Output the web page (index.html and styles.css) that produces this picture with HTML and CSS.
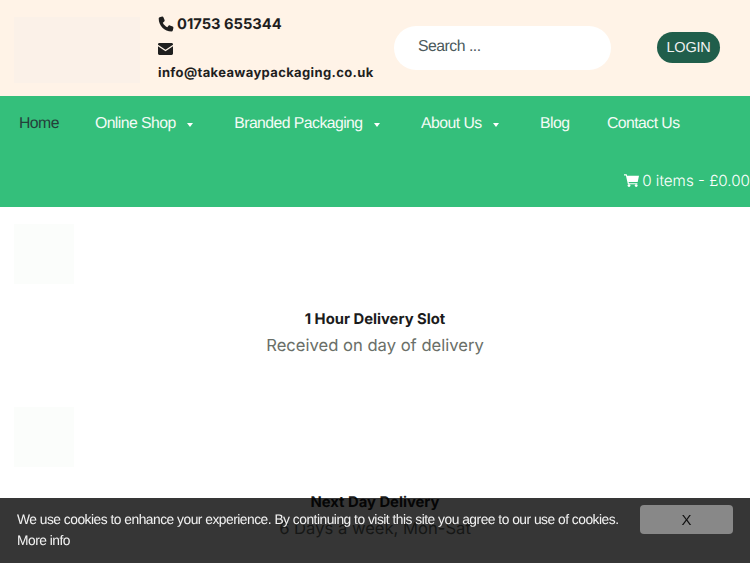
FILE: index.html
```html
<!DOCTYPE html>
<html lang="en">
<head>
<meta charset="utf-8">
<title>Takeaway Packaging</title>
<link rel="stylesheet" href="styles.css">
</head>
<body>
<header class="top">
  <div class="logo"></div>
  <div class="contact">
    <div class="phone">
      <svg class="ico-phone" viewBox="0 0 16 16"><path d="M4.2.6 1.6 1.2C1 1.4.7 1.8.7 2.4c0 7.200 5.700 13 12.900 13 .6 0 1-.3 1.200-.9l.6-2.600c.1-.6-.1-1.100-.7-1.300L11.900 9.400c-.5-.2-1-.1-1.400.3L9.300 11.200C7.400 10.300 5.700 8.600 4.800 6.700L6.300 5.500c.4-.4.5-.9.3-1.400L5.400 1.300C5.200.8 4.700.5 4.200.6Z"/></svg>
      <span>01753 655344</span>
    </div>
    <svg class="ico-mail" viewBox="0 0 15 12"><path d="M1.400 0h12.200C14.400 0 15 .6 15 1.300v.4L7.500 6.700 0 1.700v-.4C0 .6.600 0 1.400 0Z"/><path d="M0 3.200 7.500 8.200 15 3.200v7.400c0 .8-.6 1.400-1.400 1.400H1.400C.6 12 0 11.400 0 10.600Z"/></svg>
    <div class="email">info@takeawaypackaging.co.uk</div>
  </div>
  <div class="search">Search ...</div>
  <a class="login">LOGIN</a>
</header>
<nav class="nav">
  <ul class="menu">
    <li class="item active">Home</li>
    <li class="item">Online Shop<i class="caret"></i></li>
    <li class="item">Branded Packaging<i class="caret"></i></li>
    <li class="item">About Us<i class="caret"></i></li>
    <li class="item">Blog</li>
    <li class="item">Contact Us</li>
  </ul>
  <div class="cart">
    <svg class="ico-cart" viewBox="0 0 15 13"><path d="M0 .3h2.700l.4 1.500H15l-1.300 6.100H4.600l.3 1.300h8.500v1.100H3.900L1.900 1.400H0Z"/><circle cx="5" cy="11.600" r="1.400"/><circle cx="12.200" cy="11.600" r="1.400"/></svg>
    <span>0 items - £0.00</span>
  </div>
</nav>
<main>
  <section class="feature">
    <div class="thumb"></div>
    <h3 class="f-title">1 Hour Delivery Slot</h3>
    <p class="f-sub">Received on day of delivery</p>
  </section>
  <section class="feature">
    <div class="thumb"></div>
    <h3 class="f-title">Next Day Delivery</h3>
    <p class="f-sub">6 Days a week, Mon-Sat</p>
  </section>
</main>
<aside class="cookie">
  <div class="cookie-text">We use cookies to enhance your experience. By continuing to visit this site you agree to our use of cookies.<br>More info</div>
  <button class="cookie-btn">X</button>
</aside>
</body>
</html>
```
FILE: styles.css
```css
* { box-sizing: border-box; }
html, body { margin: 0; padding: 0; }
body { background: #fff; font-family: "Inter", "Liberation Sans", sans-serif; color: #1e1e1e; height: 563px; overflow: hidden; text-rendering: geometricPrecision; }

.top { height: 96px; background: #fff3e7; display: flex; align-items: flex-start; padding: 17px 0 0 14px; }
.logo { width: 126px; height: 66px; background: #fbf1e8; flex: none; }
.contact { margin: -3px 0 0 18px; width: 236px; flex: none; font-weight: 700; color: #1f1f1f; }
.phone { display: flex; align-items: center; gap: 3px; font-size: 14.700px; height: 20px; }
.ico-phone { width: 16px; height: 16px; fill: #1f1f1f; }
.ico-mail { display: block; width: 15px; height: 12px; fill: #1f1f1f; margin-top: 9px; }
.email { font-size: 13px; margin-top: 9px; line-height: 18px; white-space: nowrap; letter-spacing: .36px; }
.search { width: 217px; height: 44px; margin: 9px 0 0; flex: none; background: #fff; border-radius: 22px; padding-left: 24px; font: 15.800px/41px "Liberation Sans", sans-serif; letter-spacing: -.5px; color: #4b5a5c; }
.login { margin: 15px 0 0 46px; width: 63px; height: 31px; flex: none; background: #205e4b; border-radius: 16px; color: #f2f2f2; font: 14.500px/32px "Liberation Sans", sans-serif; letter-spacing: -.2px; text-align: center; }

.nav { height: 111px; background: #34bf7b; font-family: "Liberation Sans", sans-serif; font-size: 15.800px; color: #fff; }
.menu { list-style: none; margin: 0; padding: 0 0 0 19px; display: flex; height: 56px; }
.item { line-height: 55px; margin-right: 37.500px; white-space: nowrap; letter-spacing: -.56px; color: #f3fbf6; }
.item.active { color: #24403a; margin-right: 36px; }
.caret { display: inline-block; margin: 0 4px 0 11px; vertical-align: 1px; border-style: solid; border-width: 4px 3px 0; border-color: #fff transparent transparent; }
.cart { display: flex; justify-content: flex-end; align-items: center; gap: 3px; height: 56px; font-size: 15.200px; font-family: "Inter", sans-serif; font-weight: 300; white-space: nowrap; }
.ico-cart { width: 15px; height: 13px; fill: #fff; }

main { padding: 17px 14px 0; }
.feature { height: 183px; text-align: center; }
.thumb { width: 60px; height: 60px; background: #fbfdfb; }
.f-title { margin: 25px 0 0; font-size: 14.800px; line-height: 20px; font-weight: 700; color: #1b1b1b; }
.f-sub { margin: 5px 0 0; font-size: 16.600px; line-height: 24px; font-weight: 400; color: #6a6f68; }

.cookie { position: fixed; left: 0; right: 0; bottom: 0; height: 65px; background: rgba(0, 0, 0, .79); display: flex; align-items: flex-start; font-family: "Liberation Sans", sans-serif; color: #f2f2f2; }
.cookie-text { font-size: 13.800px; line-height: 21px; margin: 11px 0 0 17px; width: 623px; flex: none; letter-spacing: -.5px; }
.cookie-btn { margin: 7px 0 0 0; width: 93px; height: 29px; flex: none; background: #888; border: 0; border-radius: 4px; color: #111; font: 15px "Liberation Sans", sans-serif; padding: 0; }
```
